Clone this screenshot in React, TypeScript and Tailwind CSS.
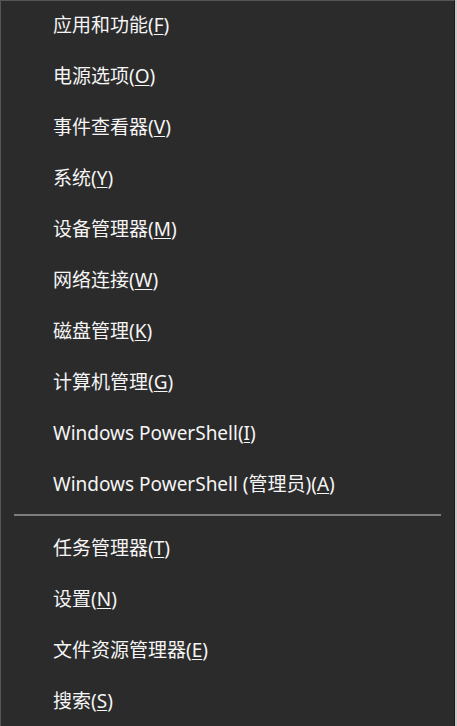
const topItems = [
  { label: '应用和功能', key: 'F' },
  { label: '电源选项', key: 'O' },
  { label: '事件查看器', key: 'V' },
  { label: '系统', key: 'Y' },
  { label: '设备管理器', key: 'M' },
  { label: '网络连接', key: 'W' },
  { label: '磁盘管理', key: 'K' },
  { label: '计算机管理', key: 'G' },
  { label: 'Windows PowerShell', key: 'I' },
  { label: 'Windows PowerShell (管理员)', key: 'A' },
];

const bottomItems = [
  { label: '任务管理器', key: 'T' },
  { label: '设置', key: 'N' },
  { label: '文件资源管理器', key: 'E' },
  { label: '搜索', key: 'S' },
];

function MenuItem({ label, accel }: { label: string; accel: string }) {
  return (
    <div className="flex h-[51px] items-center pl-[52px] text-[19px] leading-none text-[#f5f5f5]">
      <span>
        {label}(<span className="underline underline-offset-2">{accel}</span>)
      </span>
    </div>
  );
}

export default function App() {
  return (
    <div
      className="flex h-[726px] w-[457px] bg-[#c9c9c9] pr-[2px]"
      style={{ fontFamily: '"Noto Sans", "Noto Sans CJK SC", sans-serif' }}
    >
      <div className="flex-1 border-l border-t border-r border-l-[#555] border-t-[#555] border-r-[#1c1c1c] bg-[#2b2b2b]">
        <div className="-mt-px">
          {topItems.map((item) => (
            <MenuItem key={item.key} label={item.label} accel={item.key} />
          ))}
        </div>

        {/* Separator */}
        <div className="mt-[4px] mb-[7px] ml-[13px] mr-[13px] h-[2px] bg-[#7d7d7d]" />

        <div>
          {bottomItems.map((item) => (
            <MenuItem key={item.key} label={item.label} accel={item.key} />
          ))}
        </div>
      </div>
    </div>
  );
}
